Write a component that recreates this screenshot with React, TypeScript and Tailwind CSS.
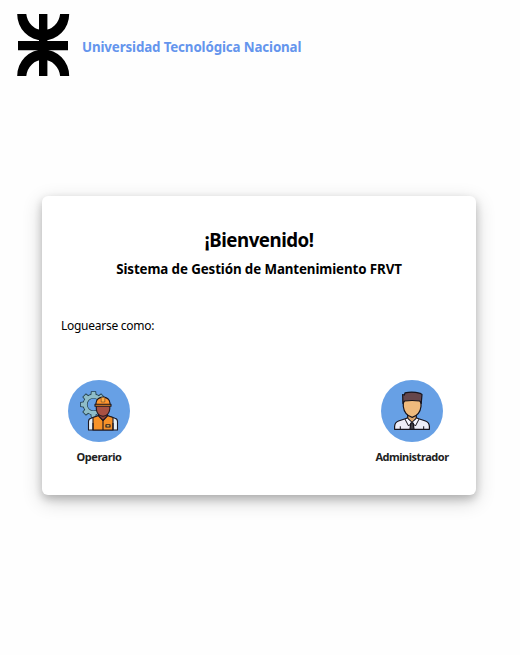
import React from "react";

function Logo() {
  return (
    <svg width="54" height="62" viewBox="0 0 54 62" className="block shrink-0">
      <path d="M1.2 0A26 26.6 0 0 0 53.2 0H44.1A17 18.2 0 0 1 10.3 0Z" />
      <path d="M1.2 62A26 26.6 0 0 1 53.2 62H44.1A17 18.2 0 0 0 10.3 62Z" />
      <path d="M23 0H31.4V62H23Z" />
      <path d="M2 27H52V36.2H2Z" />
    </svg>
  );
}

const teeth = [0, 45, 90, 135, 180, 225, 270, 315];

function WorkerIcon() {
  return (
    <svg width="62" height="62" viewBox="0 0 62 62" className="block">
      <circle cx="31" cy="31" r="31" fill="#67a0e5" />
      <g transform="translate(25.5 24.5)">
        <g fill="#26424f">
          {teeth.map((a) => <path key={a} d="M-3.2 -8L-2.6 -13.3H2.6L3.2 -8Z" transform={`rotate(${a})`} />)}
        </g>
        <circle r="8.3" fill="none" stroke="#26424f" strokeWidth="4.8" />
        <g fill="#8fbdc8">
          {teeth.map((a) => <path key={a} d="M-2.4 -8L-1.8 -12.5H1.8L2.4 -8Z" transform={`rotate(${a})`} />)}
        </g>
        <circle r="8.3" fill="none" stroke="#8fbdc8" strokeWidth="3.4" />
      </g>
      <g stroke="#1c1720" strokeWidth="1.1" strokeLinejoin="round">
        <path d="M20.5 50V41.5Q20.5 39 23 38.3L31.5 35.5H38.5L47 38.3Q49.5 39 49.5 41.5V50Z" fill="#e5eff6" />
        <path d="M25 37.6L30.8 35.5L35 40.5L39.2 35.5L45 37.6V50H25Z" fill="#f79228" />
        <path d="M30.7 33H39.3V36.2L35 40.5L30.7 36.2Z" fill="#8e4338" />
        <path d="M28.3 25H41.8V29Q41 35.8 35 36.2Q29 35.8 28.3 29Z" fill="#a85143" />
        <path d="M28 25V23Q28.8 17.3 35 17.1Q41.2 17.3 42 23V25Z" fill="#ff962e" />
        <path d="M27 24.2H43V26.3H27Z" fill="#ed8a25" />
        <path d="M33.2 17.2H36.8V22H33.2Z" fill="#ffad42" strokeWidth=".4" />
        <path d="M35 40.5V50M25 43V50M45 43V50" />
        <path d="M38 44.8H42V47H38Z" fill="#ffc85b" />
      </g>
    </svg>
  );
}

function AdminIcon() {
  return (
    <svg width="62" height="62" viewBox="0 0 62 62" className="block">
      <circle cx="31" cy="31" r="31" fill="#67a0e5" />
      <g stroke="#16131c" strokeWidth="1.2" strokeLinejoin="round">
        <path d="M13.6 49.3V46.5Q13.8 42.3 17.5 41L26.5 38H35.5L44.5 41Q48.2 42.3 48.4 46.5V49.3Z" fill="#eeedf8" />
        <path d="M26.7 33H35.3V38.3L31 43L26.7 38.3Z" fill="#dda66b" />
        <path d="M22.3 19H40V26.5Q39 35 31.2 37.4Q23.3 35 22.3 26.5Z" fill="#efba7d" />
        <path d="M22 23.5L21.6 14.5L23.4 15L24 12.9Q31 11 39.2 13.3L41 14.5L40.2 23.5L38.8 21Q31 20 23.6 21Z" fill="#66464b" />
        <path d="M26.2 38L31 42.3L27.6 46L24 39.2ZM35.8 38L31 42.3L34.4 46L38 39.2Z" fill="#f7f6ff" strokeWidth="1" />
        <path d="M29.8 43H32.2L33 49.3H29Z" fill="#444047" />
        <path d="M19.3 46.3V49M42.7 46.3V49" strokeWidth="1" />
      </g>
    </svg>
  );
}

export default function App() {
  return (
    <main className="min-h-[655px] w-full overflow-hidden bg-[#fefefe] font-['Noto_Sans','Open_Sans',sans-serif] text-black">
      <header className="flex items-center gap-[12px] pt-[14px] pl-4">
        <Logo />
        <span className="mt-[4px] text-[13.33px] leading-5 font-bold tracking-[-0.13px] whitespace-nowrap text-[#6495ed]">Universidad Tecnológica Nacional</span>
      </header>
      <section className="mt-[120px] ml-[42px] h-[299px] w-[434px] rounded-md bg-white pt-[31px] shadow-[0_4px_8px_0_rgba(0,0,0,0.2),0_6px_20px_0_rgba(0,0,0,0.19)]">
        <h1 className="text-center text-[18.7px] leading-[25px] font-bold tracking-[-0.5px] whitespace-nowrap">¡Bienvenido!</h1>
        <h2 className="mt-[7px] text-center text-[13.33px] leading-5 font-bold tracking-[-0.1px] whitespace-nowrap">Sistema de Gestión de Mantenimiento FRVT</h2>
        <p className="mt-[37px] ml-[19px] text-[12px] leading-5 tracking-[-0.27px] whitespace-nowrap">Loguearse como:</p>
        <div className="mt-[44px] flex justify-between pr-[24px] pl-[17px]">
          <button className="flex w-[80px] flex-col items-center">
            <WorkerIcon />
            <span className="mt-[5px] text-[11px] leading-5 font-bold tracking-[-0.47px] text-[#222]">Operario</span>
          </button>
          <button className="flex w-[80px] flex-col items-center">
            <AdminIcon />
            <span className="mt-[5px] text-[11px] leading-5 font-bold tracking-[-0.47px] text-[#222]">Administrador</span>
          </button>
        </div>
      </section>
    </main>
  );
}
